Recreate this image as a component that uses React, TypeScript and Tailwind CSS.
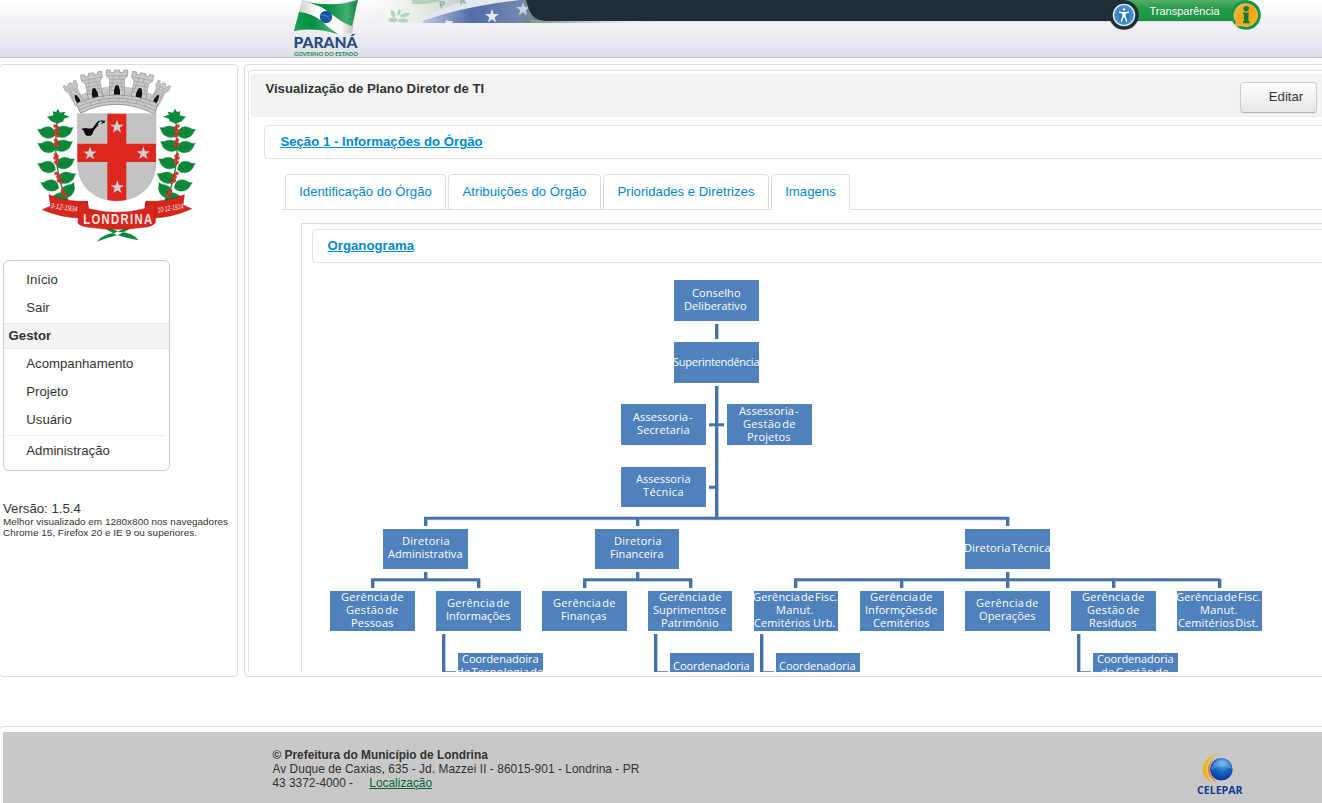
import React from "react";

type Line = [text: string, x1: number, x2: number];
type OrgNode = { x: number; y: number; w: number; h: number; base: number; lines: Line[] };

const nodes: OrgNode[] = [
  { x: 674, y: 280, w: 85, h: 41, base: 297, lines: [["Conselho", 692, 741], ["Deliberativo", 684, 747]] },
  { x: 674, y: 342, w: 85, h: 41, base: 366, lines: [["Superintendência", 673, 760]] },
  { x: 621, y: 404, w: 85, h: 41, base: 421, lines: [["Assessoria -", 633, 693], ["Secretaria", 637, 690]] },
  { x: 727, y: 404, w: 85, h: 41, base: 415, lines: [["Assessoria -", 739, 799], ["Gestão de", 743, 796], ["Projetos", 747, 791]] },
  { x: 621, y: 467, w: 85, h: 40, base: 483, lines: [["Assessoria", 636, 691], ["Técnica", 643, 684]] },
  { x: 383, y: 529, w: 85, h: 40, base: 545, lines: [["Diretoria", 402, 450], ["Administrativa", 388, 463]] },
  { x: 595, y: 529, w: 84, h: 40, base: 545, lines: [["Diretoria", 614, 662], ["Financeira", 610, 664]] },
  { x: 965, y: 529, w: 85, h: 40, base: 552, lines: [["Diretoria Técnica", 964, 1051]] },
  { x: 330, y: 591, w: 85, h: 40, base: 601, lines: [["Gerência de", 341, 404], ["Gestão de", 346, 399], ["Pessoas", 351, 394]] },
  { x: 436, y: 591, w: 85, h: 40, base: 607, lines: [["Gerência de", 447, 510], ["Informações", 446, 511]] },
  { x: 542, y: 591, w: 85, h: 40, base: 607, lines: [["Gerência de", 553, 616], ["Finanças", 561, 607]] },
  { x: 648, y: 591, w: 84, h: 40, base: 601, lines: [["Gerência de", 659, 722], ["Suprimentos e", 653, 727], ["Patrimônio", 661, 719]] },
  { x: 754, y: 591, w: 84, h: 40, base: 601, lines: [["Gerência de Fisc.", 753, 838], ["Manut.", 776, 814], ["Cemitérios Urb.", 754, 836]] },
  { x: 860, y: 591, w: 84, h: 40, base: 601, lines: [["Gerência de", 870, 933], ["Informções de", 865, 938], ["Cemitérios", 873, 930]] },
  { x: 965, y: 591, w: 85, h: 40, base: 607, lines: [["Gerência de", 976, 1039], ["Operações", 979, 1036]] },
  { x: 1071, y: 591, w: 85, h: 40, base: 601, lines: [["Gerência de", 1082, 1145], ["Gestão de", 1087, 1140], ["Resíduos", 1089, 1137]] },
  { x: 1177, y: 591, w: 85, h: 40, base: 601, lines: [["Gerência de Fisc.", 1176, 1261], ["Manut.", 1200, 1238], ["Cemitérios Dist.", 1178, 1259]] },
  { x: 458, y: 653, w: 85, h: 41, base: 663, lines: [["Coordenadoira", 462, 539], ["de Tecnologia de", 457, 544]] },
  { x: 670, y: 653, w: 84, h: 41, base: 670, lines: [["Coordenadoria", 673, 750]] },
  { x: 776, y: 653, w: 84, h: 41, base: 670, lines: [["Coordenadoria", 779, 856]] },
  { x: 1093, y: 653, w: 85, h: 41, base: 663, lines: [["Coordenadoria", 1097, 1174], ["de Gestão de", 1101, 1169]] },
];

/* Connector segments: x, y, width, height */
const links: [number, number, number, number][] = [
  [715, 324, 3, 15], [715, 386, 3, 133],
  [709, 423.5, 15, 2.5], [709, 486, 8, 2.5],
  [424, 517, 585, 2.5], [424, 517, 3, 9], [636, 517, 3, 9], [1006, 517, 3, 9],
  [424, 572, 3, 8], [636, 572, 3, 8], [1006, 572, 3, 16],
  [371, 578.5, 109, 2.5], [371, 579, 3, 9], [477, 579, 3, 9],
  [583, 578.5, 109, 2.5], [583, 579, 3, 9], [689, 579, 3, 9],
  [794, 578.5, 426, 2.5], [794, 579, 3, 9], [900, 579, 3, 9], [1112, 579, 3, 9], [1218, 579, 3, 9],
  [442, 634, 3, 40], [654, 634, 3, 40], [760, 634, 3, 40], [1077, 634, 3, 40],
];

function OrgChart() {
  return (
    <svg className="block shrink-0" width="1020" height="409" viewBox="302 263 1020 409">
      {links.map(([x, y, w, h], i) => (
        <rect key={i} x={x} y={w > h ? y - 0.5 : y} width={w > h ? w : w + 0.8} height={w > h ? h + 1.2 : h} fill="#a3b9d6" />
      ))}
      {links.map(([x, y, w, h], i) => (
        <rect key={i} x={x} y={y} width={w} height={h} fill="#4672a8" />
      ))}
      {[445, 657, 763, 1080].map((x) => (
        <rect key={x} x={x} y="671" width="11" height="1" fill="#6f94c3" />
      ))}
      {nodes.map((n) => (
        <g key={n.x + "-" + n.y}>
          <rect x={n.x} y={n.y} width={n.w} height={n.h} fill="#4f81bd" />
          {n.lines.map(([t, a, b], i) => (
            <text
              key={t}
              x={a}
              y={n.base + i * 13}
              textLength={b - a - 0.5}
              lengthAdjust="spacing"
              wordSpacing={t.endsWith("Urb.") ? 0 : -2}
              fill="#fff"
              fontSize="11"
              fontFamily="'Open Sans', 'Noto Sans', sans-serif"
            >
              {t}
            </text>
          ))}
        </g>
      ))}
    </svg>
  );
}

const STAR = "M0-21 5-6.5 20-6.5 8 2.5 12.500 17 0 8.500-12.500 17-8 2.500-20-6.500-5-6.500Z";
const LEAF = "M0 2C0-20 16-29 34-22Q44-16 53-18C47-10 47-2 38 4C24 14 8 10 0 2Z";

/* Position, rotation and side (1 = right, -1 = left) of each leaf */
const leaves: [number, number, number, number][] = [
  [168, 224, -4, 1], [166, 224, 2, -1], [166, 266, -4, 1], [166, 268, 0, -1],
  [172, 318, -4, 1], [166, 328, 0, -1], [176, 362, -4, 1], [176, 382, 4, -1],
  [188, 412, -34, 1], [204, 418, 12, -1],
];

function Branch() {
  return (
    <g>
      <path d="M172 180C162 260 164 340 200 418" fill="none" stroke="#0c8a3a" strokeWidth="4" />
      <path d="M174 146 180 158 196 155 192 164 210 170 192 176 190 184 172 191 154 184 141 170 160 166 158 154 168 156Z" fill="#0c8a3a" />
      {leaves.map(([x, y, r, s], i) => (
        <g key={i} transform={`translate(${x} ${y}) scale(${s} 1) rotate(${r})`}>
          <path d={LEAF} fill="#0c8a3a" stroke="#087531" strokeWidth="1" />
          <path d="M4 0Q26-4 48-16" fill="none" stroke="#0a6a2c" strokeWidth="1.500" />
        </g>
      ))}
      {[198, 210, 222, 240, 252, 284, 294, 306, 340, 350, 362, 392, 402].map((y, i) => (
        <g key={y} fill="#dd3a30" stroke="#9e2a20" strokeWidth="1">
          <circle cx={165 + (y > 330 ? (y - 330) / 3 : 0) + (i % 2) * 2} cy={y} r="4.800" />
          <circle cx={173 + (y > 330 ? (y - 330) / 3 : 0) - (i % 2) * 2} cy={y + 5} r="4.800" />
        </g>
      ))}
    </g>
  );
}

function Tower({ x, y, r, s = 1, h = 1 }: { x: number; y: number; r: number; s?: number; h?: number }) {
  return (
    <g transform={`translate(${x} ${y}) rotate(${r}) scale(${s} ${h})`} stroke="#777" strokeWidth="1.500">
      <path d="M-32-34H-20V-27H-8V-34H8V-27H20V-34H32V-16L22-6V46H-22V-6L-32-16Z" fill="#c9c9c9" />
      <path d="M-30-17H30M-22-6H22M-22 5H22M-22 16H22M-22 27H22M-10-17V-6M6-17V-6M-12-6V5M12-6V5M-14 5V16M14 5V16M-16 16V27M16 16V27" fill="none" strokeWidth="1" />
      <path d="M-9 40V27L-4 12H4L9 27V40Z" fill="#111" stroke="none" />
    </g>
  );
}

function Crest() {
  return (
    <svg className="block" width="164" height="175" viewBox="105 24 492 525">
      <path d="M222 118Q350 58 479 118L464 162Q350 105 242 159Z" fill="#c9c9c9" stroke="#777" strokeWidth="1.500" />
      <path d="M231 110 273 92 275 108 233 128ZM296 86 332 80V96L298 104ZM370 80 404 86 402 104 370 96ZM428 92 469 110 467 128 426 108Z" fill="#c9c9c9" stroke="#888" strokeWidth="1" />
      <Tower x={221} y={96} r={-27} s={0.66} h={0.86} />
      <Tower x={480} y={96} r={27} s={0.66} h={0.86} />
      <Tower x={279} y={73} r={-11} />
      <Tower x={423} y={73} r={11} />
      <Tower x={351} y={64} r={0} />
      <g fill="#c9c9c9" stroke="#777" strokeWidth="1.500">
        <path d="M228 132Q350 78 473 132L464 162Q350 105 242 159Z" />
        <path d="M232 141Q350 88 469 141M237 150Q350 97 466 151" fill="none" />
        <path d="M256 122 260 131M282 112 285 121M310 106 312 115M340 102V111M370 103 369 112M398 108 396 117M424 115 421 124M450 124 446 133M270 128 273 137M296 119 298 128M326 114V123M356 113V122M384 116 383 125M411 122 409 131M438 132 435 141" fill="none" strokeWidth="1" />
      </g>
      <path d="M290 545Q308 522 346 518L384 500 390 506 356 524Q322 532 290 545ZM416 541Q396 516 358 516L318 499 313 505 350 525Q386 536 416 541Z" fill="#0c8a3a" />
      <Branch />
      <g transform="translate(699 0) scale(-1 1)"><Branch /></g>
      <path d="M232 161H468V306C468 382 412 423 350 423S232 382 232 306Z" fill="#c3c3c3" />
      <path d="M322 161H379V251H468V306H379V420Q350 426 322 420V306H232V251H322Z" fill="#dc281e" />
      <path d="M232 161H468V306C468 382 412 423 350 423S232 382 232 306Z" fill="none" stroke="#b99" strokeWidth="1" />
      {[[351, 201], [270, 281], [430, 280], [352, 382]].map(([x, y]) => (
        <path key={x + "s" + y} d={STAR} transform={`translate(${x} ${y})`} fill="#cfcfcf" />
      ))}
      <path d="M244 206 258 204Q270 207 278 204L292 185Q296 180 316 182L313 189 298 192 284 208 279 216Q278 228 266 228 254 228 252 213Z" fill="#0a0a0a" />
      <path d="M292 193 300 184 308 186 298 195Z" fill="#c3c3c3" />
      <g fill="#d8261d" stroke="#8c1812" strokeWidth="1.500">
        <path d="M147 404Q196 426 262 424L258 474Q190 476 127 449L152 438Z" />
        <path d="M553 404Q504 426 438 424L442 474Q510 476 575 446L549 435Z" />
        <path d="M262 424 264 441 236 430Z" fill="#861810" />
        <path d="M438 424 436 441 466 430Z" fill="#861810" />
        <path d="M236 430Q240 424 262 426L266 446Q350 468 434 446L438 426Q462 424 466 430L466 488Q456 500 430 502 350 514 270 502 244 500 234 490Z" />
      </g>
      <g fill="#eee4e0" fontFamily="'Liberation Sans', sans-serif">
        <text x="250" y="491" fontSize="42" fontWeight="700" letterSpacing="5" textLength="210" lengthAdjust="spacingAndGlyphs">LONDRINA</text>
        <text x="151" y="444" fontSize="23" fontStyle="italic" textLength="82" lengthAdjust="spacingAndGlyphs" transform="rotate(8 151 444)">3-12-1934</text>
        <text x="474" y="458" fontSize="23" fontStyle="italic" textLength="78" lengthAdjust="spacingAndGlyphs" transform="rotate(-9 474 458)">10-12-1934</text>
      </g>
    </svg>
  );
}

function HeaderArt() {
  return (
    <svg className="block" width="980" height="57" viewBox="285 0 980 57">
      <defs>
        <linearGradient id="fade" x1="0" x2="1">
          <stop offset="0" stopColor="#f5f7f3" stopOpacity="0" />
          <stop offset=".4" stopColor="#e0e9e0" />
          <stop offset="1" stopColor="#8296bb" />
        </linearGradient>
        <linearGradient id="blue" x1="0" x2="1">
          <stop offset="0" stopColor="#bac7e0" />
          <stop offset=".4" stopColor="#526da8" />
          <stop offset=".8" stopColor="#7188ae" />
          <stop offset="1" stopColor="#6d806f" />
        </linearGradient>
        <linearGradient id="strip" x1="0" x2="1">
          <stop offset="0" stopColor="#7e9c89" />
          <stop offset=".4" stopColor="#b6c2be" />
          <stop offset="1" stopColor="#dfe1e5" stopOpacity="0" />
        </linearGradient>
        <linearGradient id="flagGreen" x1="0" x2="1">
          <stop offset="0" stopColor="#13a24f" />
          <stop offset=".45" stopColor="#078c43" />
          <stop offset=".8" stopColor="#43ae6e" />
          <stop offset="1" stopColor="#0c8641" />
        </linearGradient>
        <linearGradient id="flagWhite" x1="0" x2="1">
          <stop offset="0" stopColor="#bdbdbd" />
          <stop offset=".35" stopColor="#fff" />
          <stop offset=".75" stopColor="#fafafa" />
          <stop offset="1" stopColor="#aaa" />
        </linearGradient>
        <linearGradient id="green" x1="0" x2="0" y1="0" y2="1">
          <stop offset="0" stopColor="#53ae69" />
          <stop offset=".4" stopColor="#249b4a" />
          <stop offset="1" stopColor="#1b9442" />
        </linearGradient>
        <radialGradient id="access">
          <stop offset="0" stopColor="#1f64a4" />
          <stop offset="1" stopColor="#4d9bd5" />
        </radialGradient>
        <linearGradient id="orange" x1="0" x2="1" y1="0" y2="1">
          <stop offset="0" stopColor="#f2b544" />
          <stop offset=".5" stopColor="#f0a51c" />
          <stop offset="1" stopColor="#f7b719" />
        </linearGradient>
      </defs>

      <rect x="356" y="0" width="180" height="23" fill="url(#fade)" />
      <path d="M423 19Q460 5 515 0H545V23H423Z" fill="url(#blue)" />
      <path d="M422 17Q450 6 466 0H520Q460 7 423 21Z" fill="#e2e9ed" />
      <path d="M412 0H443Q430 5 412 4Z" fill="#9ac2a0" opacity=".6" />
      <g fill="#82b18c" fontSize="9" fontWeight="700" fontFamily="'Liberation Sans', sans-serif">
        <text x="440" y="8" transform="rotate(-12 440 8)">P</text>
        <text x="460" y="5" transform="rotate(-12 460 5)">A</text>
      </g>
      <g fill="#a4cfac" opacity=".8">
        <ellipse cx="393" cy="14" rx="2" ry="4" transform="rotate(-20 393 14)" />
        <ellipse cx="399" cy="12.500" rx="1.500" ry="3" transform="rotate(15 399 12.500)" />
        <ellipse cx="405" cy="15" rx="5" ry="1.800" transform="rotate(-15 405 15)" />
        <ellipse cx="393" cy="20" rx="4.500" ry="2.200" /><ellipse cx="403" cy="20.500" rx="5" ry="2" />
      </g>
      <g fill="#e3e8ef">
        <path d="M0-7 1.800-2 7-2 2.700 1.300 4 6.500 0 3.300-4 6.500-2.700 1.300-7-2-1.800-2Z" transform="translate(492 16)" />
        <path d="M0-7 1.800-2 7-2 2.700 1.300 4 6.500 0 3.300-4 6.500-2.700 1.300-7-2-1.800-2Z" transform="translate(523 9)" opacity=".75" />
        <path d="M445 23 446 20 450 21 453 21 452 23Z" />
      </g>
      <rect x="530" y="20" width="125" height="3" fill="url(#strip)" />
      <path d="M526 0H1125V21H545Q534 21 529 10Z" fill="#202d35" />
      <rect x="640" y="21" width="612" height="1" fill="#dddee3" />

      <path d="M302 0Q330 7 357 0L352 33Q346 35 335 33Q312 28 294 31Z" fill="url(#flagWhite)" />
      <path d="M303 1Q333 8 358 0L352 26Q344 24 334 16Q322 5 303 1Z" fill="url(#flagGreen)" />
      <path d="M299 12 294 31Q312 27 338 34Q328 28 323 22Q312 13 299 12Z" fill="url(#flagGreen)" />
      <circle cx="326" cy="17" r="6.200" fill="#1b56a0" />
      <path d="M320 15Q327 14 331 21" fill="none" stroke="#5c8fc2" strokeWidth=".8" />
      <text x="293.500" y="48" fontSize="14.500" fontWeight="900" fill="#224b80" textLength="64" lengthAdjust="spacingAndGlyphs" fontFamily="Lato, sans-serif">PARANÁ</text>
      <text x="294" y="55.500" fontSize="5.500" fontWeight="700" fill="#16884c" textLength="64" lengthAdjust="spacingAndGlyphs" fontFamily="Lato, sans-serif">GOVERNO DO ESTADO</text>

      <path d="M1125 0H1248V21H1125Z" fill="url(#green)" />
      <circle cx="1124" cy="15" r="14.800" fill="#202d35" />
      <circle cx="1124" cy="15" r="10.600" fill="url(#access)" stroke="#dff0fa" strokeWidth="1.300" />
      <g stroke="#fff" strokeWidth="1.400" fill="none" strokeLinecap="round">
        <path d="M1119.500 12.300 1124 13 1128.500 12.300M1123 13.500V16.500L1121.500 21M1125 13.500V16.500L1126.500 21M1124 13V17" />
        <circle cx="1124" cy="9.500" r="1.300" fill="#fff" stroke="none" />
      </g>
      <text x="1149.500" y="15" fontSize="11" fill="#fff" textLength="70" fontFamily="'Liberation Sans', sans-serif">Transparência</text>
      <circle cx="1246" cy="15" r="14.800" fill="#1b9442" />
      <path d="M1246 3.800A11.500 11.300 0 1 1 1242 25.700L1235 26 1236.500 22A11.500 11.300 0 0 1 1246 3.800Z" fill="url(#orange)" stroke="#fbd184" strokeWidth=".7" />
      <path d="M1243 12.500H1248.500V21L1249.500 21.500V23.300H1243V21.500L1244 21V14.500L1243 14Z" fill="#167a38" />
      <circle cx="1246.200" cy="8.800" r="2.700" fill="#167a38" />
    </svg>
  );
}

function Celepar() {
  return (
    <svg className="block" width="52" height="48" viewBox="1194 750 52 48">
      <defs>
        <radialGradient id="globe" cx=".55" cy=".25" r=".8">
          <stop offset="0" stopColor="#63aeea" />
          <stop offset=".5" stopColor="#1761c0" />
          <stop offset="1" stopColor="#06338d" />
        </radialGradient>
      </defs>
      <circle cx="1220.500" cy="769.500" r="12.300" fill="#cfd5dc" />
      <circle cx="1221.300" cy="769.300" r="11.300" fill="url(#globe)" />
      <path d="M1211 770Q1220 764 1232 769Q1230 760 1221.500 759.500Q1213 760 1211 770Z" fill="#a5d4fa" opacity=".3" />
      <path d="M1219 753.500C1200 756 1197 778 1213 783C1204 775 1203 760 1219 753.500Z" fill="#f2b50f" />
      <path d="M1215 758C1205 763 1205 778 1218 782.500C1208.500 776 1207 765 1215 758Z" fill="#e8822b" />
      <text x="1197" y="794" fontSize="11" fontWeight="700" fill="#0c3c96" textLength="45.500" lengthAdjust="spacingAndGlyphs" fontFamily="'Open Sans', sans-serif">CELEPAR</text>
    </svg>
  );
}

function MenuItem({ children }: { children: React.ReactNode }) {
  return <a className="block h-7 pl-[22.3px] leading-7">{children}</a>;
}

function Tab({ label, className }: { label: string; className: string }) {
  return (
    <a className={"flex h-9 shrink-0 items-center justify-center rounded-t border border-[#ddd] bg-white text-[#0088cc] " + className}>
      {label}
    </a>
  );
}

export default function App() {
  return (
    <div className="h-[803px] w-full overflow-hidden bg-white font-['Liberation_Sans',Arial,sans-serif] text-[13.2px] leading-5 text-[#333]">
      <header className="h-[58px] border-b border-[#bfc0d3] bg-linear-to-b from-white to-[#dfdfe9] pl-[285px]">
        <HeaderArt />
      </header>

      <main className="flex gap-[6px] pt-[6px]">
        <aside className="-ml-px h-[613px] w-[239px] shrink-0 rounded border border-[#ddd] pl-[3px] pt-[3px]">
          <div className="pl-8">
            <Crest />
          </div>
          <nav className="mt-[17px] h-[211px] w-[167px] rounded-md border border-[#ccc] pt-[5px]">
            <MenuItem>Início</MenuItem>
            <MenuItem>Sair</MenuItem>
            <div className="mt-px h-[26px] border-y border-[#e8e8e8] bg-[#f4f4f4] pl-[4.6px] font-bold leading-[24px]">Gestor</div>
            <div className="pt-px">
              <MenuItem>Acompanhamento</MenuItem>
              <MenuItem>Projeto</MenuItem>
              <MenuItem>Usuário</MenuItem>
            </div>
            <div className="mr-1 mt-px h-px bg-[#eee]" />
            <div className="pt-px">
              <MenuItem>Administração</MenuItem>
            </div>
          </nav>
          <p className="mt-7 h-[17px] leading-5">Versão: 1.5.4</p>
          <p className="whitespace-nowrap text-[9.97px] leading-[11px]">
            Melhor visualizado em 1280x800 nos navegadores
            <br />
            Chrome 15, Firefox 20 e IE 9 ou superiores.
          </p>
        </aside>

        <section className="h-[613px] w-[1100px] shrink-0 rounded border border-[#ddd] pl-[3px] pt-[5px]">
          <div className="h-[602px] overflow-hidden rounded-t border-l border-t border-[#ddd] pl-[2px] pt-[3px]">
            <div className="flex h-[43px] items-start justify-between rounded border border-[#eee] bg-[#f4f4f4] pl-[13.4px] pr-[22px]">
              <h1 className="pt-1 font-bold">Visualização de Plano Diretor de TI</h1>
              <button className="mr-[3px] mt-[7px] h-[31px] w-[77px] rounded border border-[#ccc] border-b-[#b3b3b3] bg-linear-to-b from-white to-[#e6e6e6] pl-[15px] pb-[2px] shadow-[0_1px_2px_rgba(0,0,0,0.06)]">
                Editar
              </button>
            </div>
            <div className="pl-[13px] pt-2">
              <div className="h-[34px] rounded border border-[#e3e3e3] pl-[15.4px] pt-[6px] font-bold text-[#0088cc]">
                <a className="underline">Seção 1 - Informações do Órgão</a>
              </div>
              <div className="pl-[18px] pt-[15px]">
                <div className="flex gap-[2px] border-b border-[#ddd] pl-[3px]">
                  <Tab label="Identificação do Órgão" className="-mb-px w-[161px]" />
                  <Tab label="Atribuições do Órgão" className="-mb-px w-[153px]" />
                  <Tab label="Prioridades e Diretrizes" className="-mb-px w-[166px]" />
                  <Tab label="Imagens" className="-mb-px w-[79px] border-b-white" />
                </div>
                <div className="ml-[19px] mt-[13px] border-l border-t border-[#ddd] pt-[5px]">
                  <div className="ml-[10px] h-[34px] rounded border border-[#e3e3e3] pl-[14.6px] pt-[6px] font-bold text-[#0088cc]">
                    <a className="underline">Organograma</a>
                  </div>
                  <OrgChart />
                </div>
              </div>
            </div>
          </div>
        </section>
      </main>

      <footer className="-ml-px -mr-3 mt-[49px] h-[90px] rounded border border-[#ddd] pl-[3px] pt-[5px]">
        <div className="flex h-[84px] items-start justify-between bg-[#c8c8c8] pl-[269.5px] pr-[87px] text-[11.88px] leading-[14px]">
          <div className="pt-4">
            <p className="font-bold">© Prefeitura do Município de Londrina</p>
            <p className="tracking-[0.06px]">Av Duque de Caxias, 635 - Jd. Mazzei II - 86015-901 - Londrina - PR</p>
            <p>
              43 3372-4000 - <a className="ml-[13px] text-[#006633] underline">Localização</a>
            </p>
          </div>
          <div className="pt-[18px]">
            <Celepar />
          </div>
        </div>
      </footer>
    </div>
  );
}
